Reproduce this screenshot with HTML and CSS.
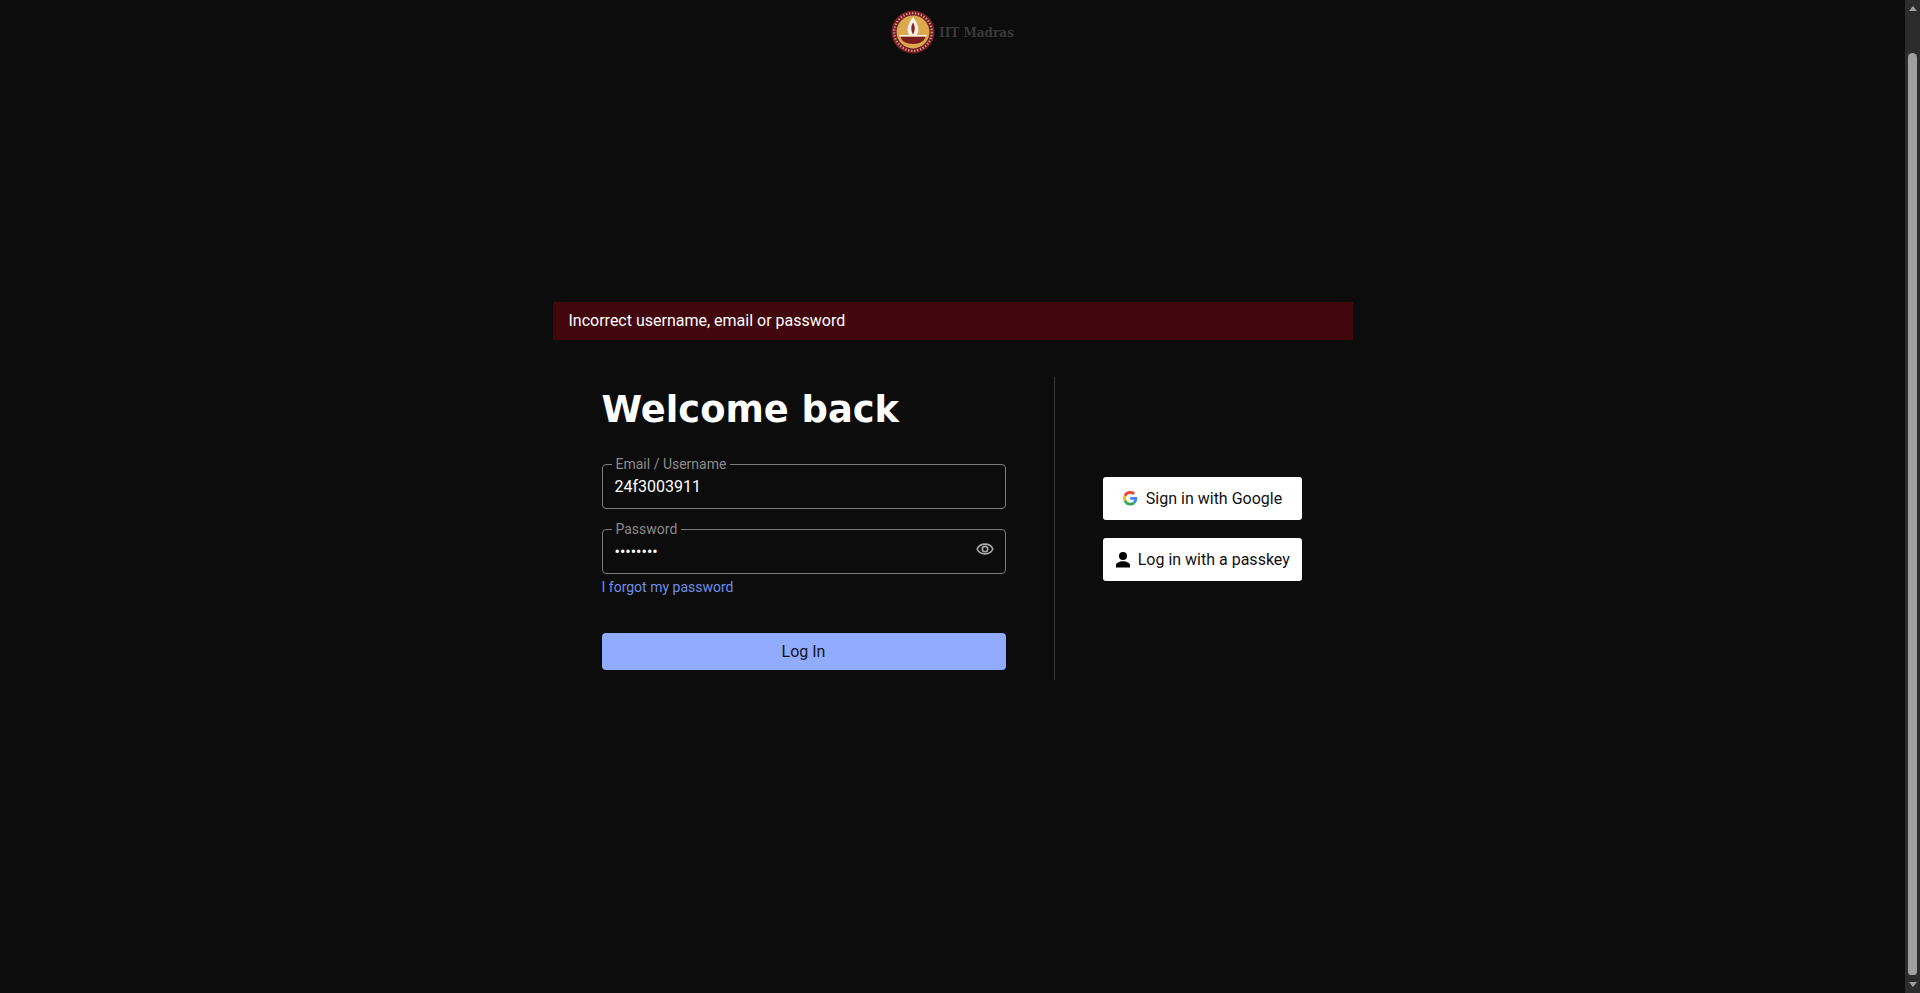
FILE: index.html
```html
<!DOCTYPE html>
<html lang="en">
<head>
  <meta charset="UTF-8">
  <title>Log In</title>
  <link rel="stylesheet" href="styles.css">
</head>
<body>

  <div class="page">
    <header class="site-header">
      <svg class="logo" viewBox="0 0 44 44" width="44" height="44" aria-hidden="true">
        <circle cx="22" cy="22" r="21.500" fill="#7a1f24"/>
        <circle cx="22" cy="22" r="18.800" fill="none" stroke="#c9a08f" stroke-width="2.200" stroke-dasharray="1.300 1.700"/>
        <circle cx="22" cy="22" r="16.400" fill="#dca94f"/>
        <path d="M22 7c2.800 3.800 5.400 8 5.400 12.500 0 2.500-.8 4.500-1.600 5.500h-7.600c-.8-1-1.600-3-1.600-5.500C16.600 15 19.200 10.800 22 7z" fill="#f6f1e6"/>
        <path d="M22 12.500c1.200 2 1.700 4.200 1.700 6s-.7 4-1.700 6c-1-2-1.700-4.200-1.700-6s.5-4 1.700-6z" fill="#8f2222"/>
        <path d="M9.500 26.500h25c-.8 4.600-5.300 7.500-12.500 7.500s-11.700-2.900-12.500-7.500z" fill="#7d1c1c"/>
        <rect x="8.500" y="25" width="27" height="1.500" fill="#f6f1e6"/>
      </svg>
      <span class="site-name">IIT Madras</span>
    </header>

    <main class="content">
      <div class="alert">Incorrect username, email or password</div>

      <div class="login-row">
        <form class="login-form">
          <h1>Welcome back</h1>

          <fieldset class="field">
            <legend>Email / Username</legend>
            <input type="text" value="24f3003911">
          </fieldset>

          <fieldset class="field">
            <legend>Password</legend>
            <input type="password" value="12345678">
            <svg class="eye" viewBox="0 0 24 24" width="18" height="18" aria-hidden="true">
              <path d="M12 5.500C7.200 5.500 3.200 8.200 1.500 12c1.700 3.800 5.700 6.500 10.500 6.500s8.800-2.700 10.500-6.500c-1.700-3.800-5.700-6.500-10.500-6.500z" fill="none" stroke="currentColor" stroke-width="2.200"/>
              <circle cx="12" cy="12" r="3.600" fill="none" stroke="currentColor" stroke-width="2.200"/>
            </svg>
          </fieldset>

          <a class="forgot" href="#">I forgot my password</a>

          <button class="login-btn" type="button">Log In</button>
        </form>

        <div class="alt-login">
          <button class="alt-btn" type="button">
            <svg viewBox="0 0 48 48" width="14.500" height="14.500" aria-hidden="true">
              <path fill="#EA4335" d="M24 9.500c3.500 0 6.700 1.200 9.200 3.600l6.900-6.900C35.900 2.400 30.500 0 24 0 14.600 0 6.500 5.400 2.600 13.200l8 6.200C12.400 13.700 17.700 9.500 24 9.500z"/>
              <path fill="#4285F4" d="M47 24.500c0-1.600-.1-3.100-.4-4.500H24v9h12.900c-.6 3-2.200 5.500-4.700 7.200l7.700 6c4.500-4.200 7.100-10.300 7.100-17.700z"/>
              <path fill="#FBBC05" d="M10.600 28.600c-.5-1.400-.8-3-.8-4.600s.3-3.200.8-4.600l-8-6.200C.9 16.500 0 20.100 0 24s.9 7.500 2.600 10.800l8-6.200z"/>
              <path fill="#34A853" d="M24 48c6.500 0 11.900-2.100 15.900-5.800l-7.700-6c-2.100 1.400-4.900 2.300-8.200 2.300-6.300 0-11.600-4.200-13.400-9.900l-8 6.200C6.500 42.600 14.600 48 24 48z"/>
            </svg>
            Sign in with Google
          </button>
          <button class="alt-btn" type="button">
            <svg viewBox="1 0 14 18" width="14" height="18" aria-hidden="true">
              <circle cx="8" cy="5" r="4"/>
              <path d="M8 10.300c-3.500 0-7 1.700-7 3.900v2.300h14v-2.300c0-2.200-3.500-3.900-7-3.900z"/>
            </svg>
            Log in with a passkey
          </button>
        </div>
      </div>
    </main>
  </div>

  <div class="scrollbar">
    <span class="arrow arrow-up"></span>
    <span class="thumb"></span>
    <span class="arrow arrow-down"></span>
  </div>

</body>
</html>
```

FILE: styles.css
```css
* {
  box-sizing: border-box;
}
html, body {
  height: 100%;
}
body {
  margin: 0;
  display: flex;
  overflow: hidden;
  font-family: 'Roboto', sans-serif;
  background-color: #0c0c0c;
  color: #fff;
}
.page {
  flex: 1;
  min-width: 0;
}
.site-header {
  display: flex;
  justify-content: center;
  align-items: center;
  gap: 4px;
  padding-top: 10px;
  height: 54px;
}
.logo {
  display: block;
}
.site-name {
  font-family: 'DejaVu Serif', serif;
  font-size: 13.4px;
  font-weight: bold;
  font-stretch: condensed;
  color: #3a3a3a;
}
.content {
  width: 800px;
  margin: 248px auto 0;
}
.alert {
  height: 38px;
  line-height: 37px;
  padding: 0 16px;
  font-size: 16px;
  background-color: #42060d;
}
.login-row {
  display: flex;
  margin-top: 37px;
}
.login-form {
  width: 502px;
  height: 303px;
  padding: 0 48px 0 49px;
  border-right: 1px solid #3a3a3a;
}
h1 {
  margin: 9px 0 30px;
  font-family: 'DejaVu Sans', sans-serif;
  font-size: 36.8px;
  line-height: 48px;
  font-weight: bold;
}
.field {
  position: relative;
  margin: -8px 0 20px;
  padding: 0 12px;
  height: 53px;
  border: 1px solid #7c7c7c;
  border-radius: 4px;
}
.field legend {
  padding: 0 4px;
  margin-left: -3px;
  font-size: 14px;
  line-height: 16px;
  color: #8a8a8a;
}
.field input {
  display: block;
  width: 100%;
  height: 20px;
  margin-top: 4px;
  padding: 0;
  border: none;
  outline: none;
  background: none;
  color: #fff;
  font-family: 'Roboto', sans-serif;
  font-size: 16px;
}
.eye {
  position: absolute;
  right: 11px;
  top: 3px;
  color: #a8a8a8;
}
.forgot {
  display: block;
  margin-top: -17px;
  font-size: 14px;
  line-height: 20px;
  color: #6f8fe8;
  text-decoration: none;
}
.login-btn {
  display: block;
  width: 100%;
  height: 37px;
  margin-top: 36px;
  border: none;
  border-radius: 4px;
  background-color: #91abff;
  color: #10131c;
  font-family: 'Roboto', sans-serif;
  font-size: 16px;
  cursor: pointer;
}
.alt-login {
  flex: 1;
  display: flex;
  flex-direction: column;
  justify-content: center;
  gap: 17.5px;
  padding: 1px 49px 0 48px;
  height: 303px;
}
.alt-btn {
  display: flex;
  justify-content: center;
  align-items: center;
  gap: 8px;
  width: 199.5px;
  height: 43.5px;
  padding: 0 0 0 1px;
  border: none;
  border-radius: 3px;
  background-color: #fff;
  color: #111;
  font-family: 'Roboto', sans-serif;
  font-size: 16px;
  cursor: pointer;
}
.scrollbar {
  flex: none;
  width: 15px;
  height: 100%;
  display: flex;
  flex-direction: column;
  align-items: center;
  background-color: #2c2c2c;
}
.thumb {
  flex: 1;
  width: 9px;
  margin: 42px 0 1px;
  border-radius: 5px 5px 4px 4px;
  background-color: #9f9f9f;
}
.arrow {
  flex: none;
  width: 0;
  height: 0;
  border-left: 4.5px solid transparent;
  border-right: 4.5px solid transparent;
}
.arrow-up {
  margin-top: 6px;
  border-bottom: 5px solid #9f9f9f;
}
.arrow-down {
  margin: 6px 0 6px;
  border-top: 5px solid #9f9f9f;
}
```
